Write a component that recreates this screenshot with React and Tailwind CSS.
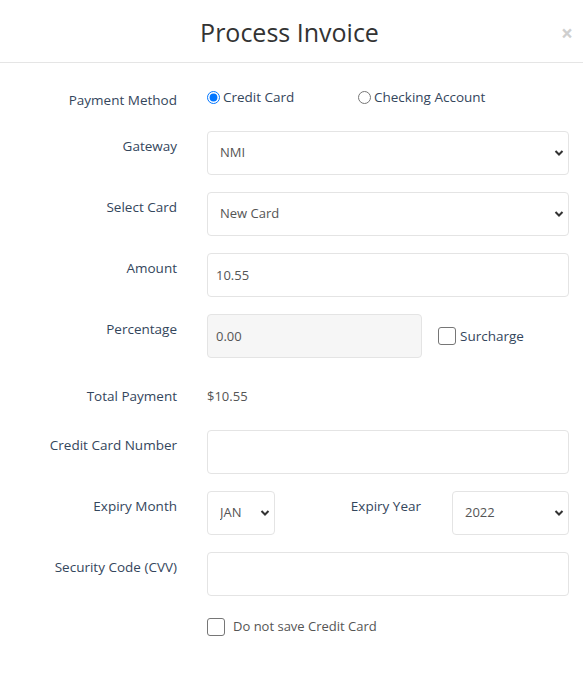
import { useState } from "react";

const font = { fontFamily: '"Open Sans", "Liberation Sans", sans-serif' };

function Chevron() {
  return (
    <svg
      className="pointer-events-none absolute right-[5px] top-1/2 -translate-y-1/2"
      width="10"
      height="7"
      viewBox="0 0 10 7"
    >
      <path d="M1.5 1.5 L5 5 L8.5 1.5" fill="none" stroke="#333" strokeWidth="2" />
    </svg>
  );
}

function Select({ value, options, className = "" }) {
  return (
    <div className={`relative ${className}`}>
      <select
        defaultValue={value}
        className="h-[44px] w-full appearance-none rounded-[4px] border border-[#e4e4e4] bg-white pl-3 text-[13px] text-[#555] outline-none"
      >
        {options.map((o) => (
          <option key={o}>{o}</option>
        ))}
      </select>
      <Chevron />
    </div>
  );
}

function Row({ label, children, className = "" }) {
  return (
    <div className={`flex gap-[30px] ${className}`}>
      <div className="w-[162px] shrink-0 pt-[6px] text-right text-[13.5px] leading-[18px] text-[#34465c]">
        {label}
      </div>
      <div className="flex-1">{children}</div>
    </div>
  );
}

function Box() {
  return <span className="inline-block h-[18px] w-[18px] rounded-[3px] border border-[#767676] bg-white" />;
}

export default function App() {
  const [method, setMethod] = useState("card");

  return (
    <div className="min-h-screen bg-white" style={font}>
      <div className="relative flex h-[63px] items-center justify-center border-b border-[#e5e5e5]">
        <h1 className="pt-[3px] pr-[4px] text-[25px] text-[#333]">Process Invoice</h1>
        <span className="absolute right-[10px] top-[23px] text-[21px] font-bold leading-none text-[#cfcfcf]">
          ×
        </span>
      </div>

      <div className="pr-[14px] pl-[15px] pt-[22px]">
        <div className="flex gap-[30px]">
          <div className="w-[162px] shrink-0 pt-[6px] text-right text-[13.5px] leading-[18px] text-[#34465c]">
            Payment Method
          </div>
          <div className="flex items-center text-[13.5px] text-[#34465c]">
            <label className="flex w-[151px] items-center gap-[3px]">
              <input
                type="radio"
                checked={method === "card"}
                onChange={() => setMethod("card")}
                className="m-0 h-[13px] w-[13px]"
              />
              Credit Card
            </label>
            <label className="flex items-center gap-[3px]">
              <input
                type="radio"
                checked={method === "check"}
                onChange={() => setMethod("check")}
                className="m-0 h-[13px] w-[13px]"
              />
              Checking Account
            </label>
          </div>
        </div>

        <Row label="Gateway" className="mt-[22px]">
          <Select value="NMI" options={["NMI"]} />
        </Row>

        <Row label="Select Card" className="mt-[17px]">
          <Select value="New Card" options={["New Card"]} />
        </Row>

        <Row label="Amount" className="mt-[17px]">
          <input
            defaultValue="10.55"
            className="h-[44px] w-full rounded-[4px] border border-[#e4e4e4] px-[8px] text-[13px] text-[#555] outline-none"
          />
        </Row>

        <Row label="Percentage" className="mt-[17px]">
          <div className="flex items-center">
            <input
              defaultValue="0.00"
              disabled
              className="h-[44px] w-[215px] rounded-[4px] border border-[#e4e4e4] bg-[#f6f6f6] px-[8px] text-[13px] text-[#555] outline-none"
            />
            <label className="ml-[16px] flex items-center gap-[4px] text-[13.5px] text-[#34465c]">
              <Box />
              Surcharge
            </label>
          </div>
        </Row>

        <Row label="Total Payment" className="mt-[23px]">
          <div className="pt-[6px] text-[13px] leading-[18px] text-[#555]">$10.55</div>
        </Row>

        <Row label="Credit Card Number" className="mt-[25px]">
          <input className="h-[44px] w-full rounded-[4px] border border-[#e4e4e4] px-[8px] text-[13px] outline-none" />
        </Row>

        <Row label="Expiry Month" className="mt-[17px]">
          <div className="flex">
            <Select value="JAN" options={["JAN"]} className="w-[68px]" />
            <div className="flex-1 pt-[6px] pr-[31px] text-right text-[13.5px] leading-[18px] text-[#34465c]">
              Expiry Year
            </div>
            <Select value="2022" options={["2022"]} className="w-[117px]" />
          </div>
        </Row>

        <Row label="Security Code (CVV)" className="mt-[17px]">
          <input className="h-[44px] w-full rounded-[4px] border border-[#e4e4e4] px-[8px] text-[13px] outline-none" />
        </Row>

        <Row label="" className="mt-[21px]">
          <label className="flex items-center gap-[8px] text-[13px] text-[#555]">
            <Box />
            Do not save Credit Card
          </label>
        </Row>
      </div>
    </div>
  );
}
